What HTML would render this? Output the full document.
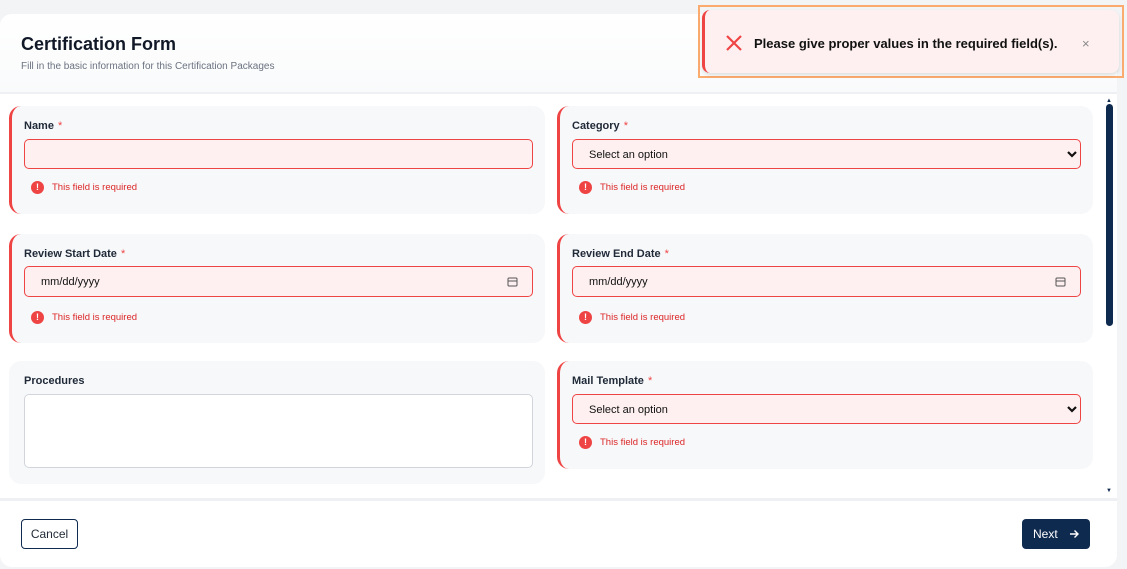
<!DOCTYPE html>
<html><head><style>
*{box-sizing:border-box;margin:0;padding:0}
body{width:1127px;height:569px;background:#f3f4f6;font-family:"Liberation Sans",sans-serif;position:relative;overflow:hidden}
.a{position:absolute}
.card{left:0;top:14px;width:1117px;height:553px;background:#fff;border-radius:12px;overflow:hidden}
.fc{position:absolute;background:#f7f8fa;border-radius:12px}
.err{border-left:3px solid #ef4444}
.lbl{position:absolute;left:12px;top:14px;font-size:11px;font-weight:bold;color:#1f2937}
.lbl span{color:#ef4444;margin-left:4px;font-weight:normal}
.in{position:absolute;left:12px;width:509px;height:30px;background:#fef0f0;border:1px solid #ef4444;border-radius:5px;font-size:11px;color:#111;padding:9px 0 0 16px}
.em{position:absolute;left:19px;font-size:9.5px;color:#dc2626;display:flex;align-items:center}
.em i{display:inline-block;width:13px;height:13px;border-radius:50%;background:#ef4444;color:#fff;font-style:normal;font-size:9px;font-weight:bold;text-align:center;line-height:13px;margin-right:8px}
.chev{position:absolute;right:2px;top:8px}
</style></head><body>
<div class="a card">
 <div class="a" style="left:0;top:0;width:1117px;height:78px;background:linear-gradient(#fff,#f9fafb)"></div>
 <div class="a" style="left:21px;top:20px;font-size:18px;font-weight:bold;color:#111827">Certification Form</div>
 <div class="a" style="left:21px;top:47px;font-size:10px;color:#6b7280">Fill in the basic information for this Certification Packages</div>
 <div class="a" style="left:0;top:78px;width:1117px;height:2px;background:#eef0f3"></div>

 <div class="fc err" style="left:9px;top:92px;width:536px;height:108px">
  <div class="lbl">Name<span>*</span></div>
  <div class="in" style="top:33px"></div>
  <div class="em" style="top:75px"><i>!</i>This field is required</div>
 </div>
 <div class="fc err" style="left:557px;top:92px;width:536px;height:108px">
  <div class="lbl">Category<span>*</span></div>
  <div class="in" style="top:33px">Select an option<svg class="chev" width="12" height="12" viewBox="0 0 12 12"><path d="M2 4l4 4 4-4" stroke="#111" stroke-width="2.2" fill="none"/></svg></div>
  <div class="em" style="top:75px"><i>!</i>This field is required</div>
 </div>
 <div class="fc err" style="left:9px;top:220px;width:536px;height:109px">
  <div class="lbl">Review Start Date<span>*</span></div>
  <div class="in" style="top:32px;height:31px">mm/dd/yyyy<svg class="chev" style="top:9px;right:14px" width="11" height="11" viewBox="0 0 11 11"><rect x="1" y="2" width="9" height="8" rx="1" stroke="#555" fill="none"/><path d="M1 5h9" stroke="#555"/></svg></div>
  <div class="em" style="top:77px"><i>!</i>This field is required</div>
 </div>
 <div class="fc err" style="left:557px;top:220px;width:536px;height:109px">
  <div class="lbl">Review End Date<span>*</span></div>
  <div class="in" style="top:32px;height:31px">mm/dd/yyyy<svg class="chev" style="top:9px;right:14px" width="11" height="11" viewBox="0 0 11 11"><rect x="1" y="2" width="9" height="8" rx="1" stroke="#555" fill="none"/><path d="M1 5h9" stroke="#555"/></svg></div>
  <div class="em" style="top:77px"><i>!</i>This field is required</div>
 </div>
 <div class="fc" style="left:9px;top:347px;width:536px;height:123px">
  <div class="lbl" style="left:15px">Procedures</div>
  <div class="a" style="left:15px;top:33px;width:509px;height:74px;background:#fff;border:1px solid #d1d5db;border-radius:5px"></div>
 </div>
 <div class="fc err" style="left:557px;top:347px;width:536px;height:108px">
  <div class="lbl">Mail Template<span>*</span></div>
  <div class="in" style="top:33px">Select an option<svg class="chev" width="12" height="12" viewBox="0 0 12 12"><path d="M2 4l4 4 4-4" stroke="#111" stroke-width="2.2" fill="none"/></svg></div>
  <div class="em" style="top:75px"><i>!</i>This field is required</div>
 </div>

 <div class="a" style="left:1106px;top:90px;width:7px;height:222px;background:#0f2a4f;border-radius:4px"></div>
 <div class="a" style="left:1106px;top:84px;font-size:6px;color:#0f2a4f">▲</div>
 <div class="a" style="left:1106px;top:474px;font-size:6px;color:#0f2a4f">▼</div>

 <div class="a" style="left:0;top:484px;width:1117px;height:3px;background:#eef0f3"></div>
 <div class="a" style="left:21px;top:505px;width:57px;height:30px;border:1px solid #0f2a4f;border-radius:4px;font-size:12px;color:#1f2937;text-align:center;line-height:28px">Cancel</div>
 <div class="a" style="left:1022px;top:505px;width:68px;height:30px;background:#0f2a4f;border-radius:4px;font-size:12px;color:#fff;line-height:30px;padding-left:11px">Next<svg style="position:absolute;left:47px;top:10px" width="10" height="10" viewBox="0 0 10 10"><path d="M1 5h8M5.5 1.5L9 5 5.5 8.5" stroke="#fff" stroke-width="1.4" fill="none"/></svg></div>
</div>

<div class="a" style="left:698px;top:5px;width:426px;height:73px;border:2px solid #fbab6e"></div>
<div class="a" style="left:702px;top:10px;width:417px;height:63px;background:#fef0f0;border-left:3px solid #ef4444;border-radius:8px;box-shadow:0 2px 4px rgba(0,0,0,.12)"></div>
<svg class="a" style="left:725px;top:34px" width="18" height="18" viewBox="0 0 18 18"><path d="M2 2l14 14M16 2L2 16" stroke="#ef4444" stroke-width="2.2"/></svg>
<div class="a" style="left:754px;top:36px;font-size:13px;font-weight:bold;color:#111">Please give proper values in the required field(s).</div>
<div class="a" style="left:1082px;top:36px;font-size:13px;color:#888">×</div>
</body></html>
